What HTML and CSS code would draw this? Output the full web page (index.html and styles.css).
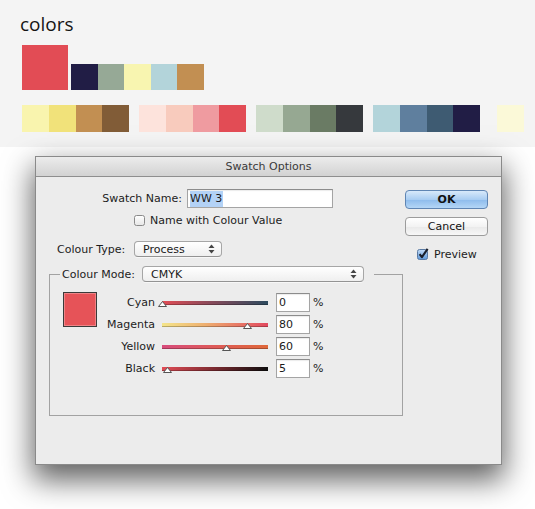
FILE: index.html
```html
<!DOCTYPE html>
<html lang="en">
<head>
<meta charset="utf-8">
<title>colors</title>
<link rel="stylesheet" href="styles.css">
</head>
<body>
<section class="palette">
  <h1 class="title">colors</h1>
  <div class="row-main">
    <div class="sw big c-red"></div>
    <div class="small-set">
      <div class="sw c-navy"></div>
      <div class="sw c-sage"></div>
      <div class="sw c-pale"></div>
      <div class="sw c-lblue"></div>
      <div class="sw c-tan"></div>
    </div>
  </div>
  <div class="row-groups">
    <div class="group-sw">
      <div class="sw c-y1"></div><div class="sw c-y2"></div><div class="sw c-tan"></div><div class="sw c-brown"></div>
    </div>
    <div class="group-sw">
      <div class="sw c-p1"></div><div class="sw c-p2"></div><div class="sw c-p3"></div><div class="sw c-red"></div>
    </div>
    <div class="group-sw">
      <div class="sw c-g1"></div><div class="sw c-g2"></div><div class="sw c-g3"></div><div class="sw c-g4"></div>
    </div>
    <div class="group-sw">
      <div class="sw c-lblue"></div><div class="sw c-b2"></div><div class="sw c-b3"></div><div class="sw c-navy"></div>
    </div>
    <div class="group-sw lone">
      <div class="sw c-cream"></div>
    </div>
  </div>
</section>

<section class="stage">
  <div class="dialog">
    <div class="titlebar">Swatch Options</div>
    <div class="dlg-body">
      <div class="main">
        <div class="name-row">
          <span class="name-lbl">Swatch Name:</span>
          <div class="textfield name-field"><span class="selected">WW 3</span></div>
        </div>
        <div class="check-row name-check">
          <svg class="cb" width="11" height="11" viewBox="0 0 11 11"><defs><linearGradient id="cbg" x1="0" y1="0" x2="0" y2="1"><stop offset="0" stop-color="#ffffff"/><stop offset="1" stop-color="#e6e6e6"/></linearGradient></defs><rect x="0.5" y="0.5" width="10" height="10" rx="2" fill="url(#cbg)" stroke="#8a8a8a"/></svg>
          <span>Name with Colour Value</span>
        </div>
        <div class="type-row">
          <span class="type-lbl">Colour Type:</span>
          <div class="popup process"><span>Process</span>
            <svg class="arrows" width="7" height="10" viewBox="0 0 7 10"><polygon points="3.5,0.5 6.5,4 0.5,4" fill="#444"/><polygon points="0.5,6 6.5,6 3.5,9.5" fill="#444"/></svg>
          </div>
        </div>
        <fieldset class="group">
          <legend class="legend">
            <span class="mode-lbl">Colour Mode:</span>
            <div class="popup cmyk"><span>CMYK</span>
              <svg class="arrows" width="7" height="10" viewBox="0 0 7 10"><polygon points="3.5,0.5 6.5,4 0.5,4" fill="#444"/><polygon points="0.5,6 6.5,6 3.5,9.5" fill="#444"/></svg>
            </div>
          </legend>
          <div class="group-inner">
            <div class="preview-swatch"></div>
            <div class="sliders">
              <span class="s-lbl">Cyan</span>
              <div class="slider"><div class="bar bar-cyan"></div><svg class="thumb" style="left:0%" width="9" height="6" viewBox="0 0 9 6"><polygon points="4.5,0.5 8.5,5.5 0.5,5.5" fill="#fff" stroke="#555"/></svg></div>
              <div class="textfield num">0</div>
              <span class="pct">%</span>

              <span class="s-lbl">Magenta</span>
              <div class="slider"><div class="bar bar-magenta"></div><svg class="thumb" style="left:80%" width="9" height="6" viewBox="0 0 9 6"><polygon points="4.5,0.5 8.5,5.5 0.5,5.5" fill="#fff" stroke="#555"/></svg></div>
              <div class="textfield num">80</div>
              <span class="pct">%</span>

              <span class="s-lbl">Yellow</span>
              <div class="slider"><div class="bar bar-yellow"></div><svg class="thumb" style="left:60%" width="9" height="6" viewBox="0 0 9 6"><polygon points="4.5,0.5 8.5,5.5 0.5,5.5" fill="#fff" stroke="#555"/></svg></div>
              <div class="textfield num">60</div>
              <span class="pct">%</span>

              <span class="s-lbl">Black</span>
              <div class="slider"><div class="bar bar-black"></div><svg class="thumb" style="left:5%" width="9" height="6" viewBox="0 0 9 6"><polygon points="4.5,0.5 8.5,5.5 0.5,5.5" fill="#fff" stroke="#555"/></svg></div>
              <div class="textfield num">5</div>
              <span class="pct">%</span>
            </div>
          </div>
        </fieldset>
      </div>
      <div class="side">
        <div class="btn ok">OK</div>
        <div class="btn cancel">Cancel</div>
        <div class="check-row preview">
          <svg class="cb" width="12" height="12" viewBox="0 0 12 12"><defs><linearGradient id="cbb" x1="0" y1="0" x2="0" y2="1"><stop offset="0" stop-color="#c4dcf6"/><stop offset="1" stop-color="#5d97d8"/></linearGradient></defs><rect x="0.5" y="1.5" width="10" height="10" rx="2" fill="url(#cbb)" stroke="#5a7aa3"/><path d="M2.6 6.2 L4.9 9.2 L10.6 0.8" fill="none" stroke="#1b1f2a" stroke-width="2.1" stroke-linejoin="round"/></svg>
          <span>Preview</span>
        </div>
      </div>
    </div>
  </div>
</section>
</body>
</html>
```

FILE: styles.css
```css
* { box-sizing: border-box; }

html, body {
  margin: 0;
  padding: 0;
  background: #ffffff;
}

body {
  width: 535px;
  height: 509px;
  overflow: hidden;
  font-family: "DejaVu Sans", "Liberation Sans", sans-serif;
  font-size: 11px;
  color: #1c1c1c;
}

/* ---------- palette ---------- */
.palette {
  height: 147px;
  background: #f4f4f4;
  padding: 12px 0 0 22px;
}

.title {
  margin: 0 0 0 -2px;
  font-family: "Open Sans", "Liberation Sans", sans-serif;
  font-weight: 400;
  font-size: 19px;
  line-height: 24px;
  height: 24px;
  color: #141414;
}

.row-main {
  display: flex;
  align-items: flex-end;
  margin-top: 9px;
  height: 45px;
}

.sw {
  flex: 0 0 auto;
}

.big {
  width: 46px;
  height: 45px;
}

.small-set {
  display: flex;
  margin-left: 3px;
}

.small-set .sw {
  width: 26.6px;
  height: 26px;
}

.row-groups {
  display: flex;
  gap: 10px;
  margin-top: 15px;
}

.group-sw {
  display: flex;
}

.group-sw .sw {
  width: 26.75px;
  height: 27px;
}

.group-sw.lone {
  margin-left: 7px;
}

.c-red   { background: #e24c55; }
.c-navy  { background: #211d45; }
.c-sage  { background: #96a996; }
.c-pale  { background: #f8f5b0; }
.c-lblue { background: #b3d4da; }
.c-tan   { background: #c28f52; }
.c-y1    { background: #f9f4ae; }
.c-y2    { background: #f1e27a; }
.c-brown { background: #815c37; }
.c-p1    { background: #fde3dc; }
.c-p2    { background: #f8cbbd; }
.c-p3    { background: #ef9ba0; }
.c-g1    { background: #cfdccb; }
.c-g2    { background: #96a892; }
.c-g3    { background: #6a7b64; }
.c-g4    { background: #36393d; }
.c-b2    { background: #5f7f9e; }
.c-b3    { background: #3e5b72; }
.c-cream { background: #fbf9d8; }

/* ---------- dialog ---------- */
.stage {
  padding: 9px 0 0 35px;
}

.dialog {
  width: 467px;
  height: 309px;
  border: 1px solid #8a8a8a;
  background: #ececec;
  box-shadow: 0 13px 28px 2px rgba(0, 0, 0, 0.62);
}

.titlebar {
  height: 20px;
  line-height: 19px;
  text-align: center;
  color: #3a3a3a;
  background: linear-gradient(#ececec, #d2d2d2);
  border-bottom: 1px solid #8e8e8e;
}

.dlg-body {
  display: flex;
  padding-top: 12px;
}

.main {
  width: 367px;
  padding-left: 13px;
}

.name-row {
  display: flex;
  align-items: center;
  height: 19px;
}

.name-lbl {
  width: 133px;
  text-align: right;
  margin-right: 5px;
}

.textfield {
  height: 19px;
  background: #ffffff;
  border: 1px solid #a4a4a4;
  border-top-color: #8c8c8c;
  box-shadow: inset 0 1px 1px rgba(0, 0, 0, 0.08);
  display: flex;
  align-items: center;
  padding-left: 2px;
  color: #1a1a1a;
}

.name-field {
  width: 146px;
}

.selected {
  background: #b3d2f6;
  padding: 1px 1px 1px 0;
  line-height: 14px;
}

.check-row {
  display: flex;
  align-items: center;
  height: 13px;
}

.check-row .cb {
  flex: 0 0 auto;
  margin-right: 5px;
}

.name-check {
  margin-top: 6px;
  padding-left: 85px;
}

.type-row {
  display: flex;
  align-items: center;
  margin-top: 14px;
  height: 16px;
  padding-left: 8px;
}

.type-lbl {
  width: 77px;
}

.popup {
  height: 16px;
  display: flex;
  align-items: center;
  justify-content: space-between;
  padding: 0 6px 0 8px;
  background: linear-gradient(#ffffff, #efefef);
  border: 1px solid #a6a6a6;
  border-bottom-color: #939393;
  border-radius: 4px;
  box-shadow: 0 1px 0 rgba(255, 255, 255, 0.6);
  color: #1a1a1a;
}

.process {
  width: 88px;
}

.mode-lbl {
  width: 80px;
}

.cmyk {
  width: 222px;
}

.group {
  margin: 9px 0 0 0;
  padding: 0 0 0 10px;
  width: 354px;
  min-width: 0;
  border: 1px solid #a2a2a2;
}

.legend {
  display: flex;
  align-items: center;
  height: 16px;
  padding: 0 10px 0 2px;
}

.group-inner {
  display: flex;
  align-items: flex-start;
  height: 133px;
  padding: 10px 0 0 3px;
}

.preview-swatch {
  flex: 0 0 auto;
  width: 34px;
  height: 35px;
  background: #e65358;
  border: 1px solid #3a3a3a;
  box-shadow: inset 0 0 0 1px rgba(255, 220, 220, 0.35);
}

.sliders {
  display: grid;
  grid-template-columns: 65px 114px 34px auto;
  grid-auto-rows: 19px;
  row-gap: 3px;
  margin-top: 1px;
  align-items: center;
}

.s-lbl {
  text-align: right;
  padding-right: 7px;
}

.slider {
  position: relative;
  width: 106px;
  height: 19px;
}

.sliders .num {
  width: 34px;
}

.pct {
  margin-left: 3px;
}

.bar {
  position: absolute;
  left: 0;
  right: 0;
  top: 8px;
  height: 4px;
  box-shadow: inset 0 -1px 0 rgba(0, 0, 0, 0.25);
}

.bar-cyan    { background: linear-gradient(to right, #e24c55, #8a4a5a 45%, #2c4a5e); }
.bar-magenta { background: linear-gradient(to right, #f4e58a, #eeb070 40%, #e2485e); }
.bar-yellow  { background: linear-gradient(to right, #d84c7c, #de5a58 50%, #e0683a); }
.bar-black   { background: linear-gradient(to right, #e24c55, #7a2a30 50%, #0e0e0e); }

.thumb {
  position: absolute;
  top: 8px;
  margin-left: -4px;
}

/* ---------- side buttons ---------- */
.side {
  margin-left: 2px;
  width: 83px;
}

.btn {
  width: 83px;
  height: 19px;
  border-radius: 4px;
  display: flex;
  align-items: center;
  justify-content: center;
  color: #111;
}

.ok {
  margin-top: 1px;
  font-weight: bold;
  background: linear-gradient(#d8e9fa, #a9cdf2 50%, #8dbbec 51%, #b4d6f6);
  border: 1px solid #5f85b3;
}

.cancel {
  margin-top: 8px;
  background: linear-gradient(#ffffff, #f3f3f3 50%, #e9e9e9 51%, #f7f7f7);
  border: 1px solid #9c9c9c;
}

.preview {
  margin-top: 11px;
  padding-left: 12px;
  height: 14px;
}
```
